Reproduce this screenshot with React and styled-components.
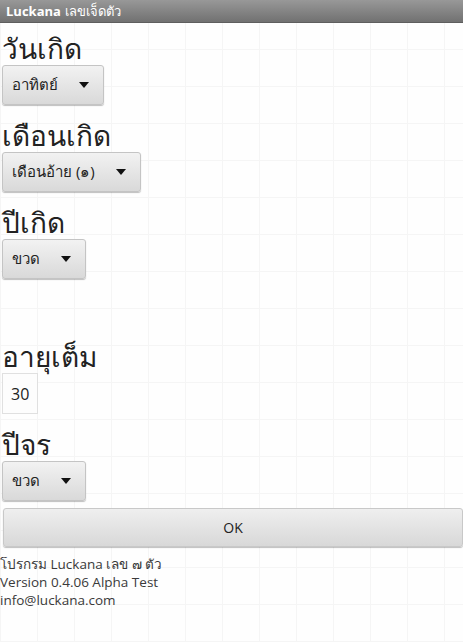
import React from "react";
import styled, { createGlobalStyle } from "styled-components";

const Global = createGlobalStyle`
  html, body { margin: 0; padding: 0; background: #fff; }
  body { font-family: "Open Sans", "Noto Sans", "DejaVu Sans", sans-serif; }
`;

const Screen = styled.div`
  width: 463px;
  height: 642px;
  overflow: hidden;
  background-color: #fefefe;
  background-image:
    linear-gradient(to right, #f5f5f5 1px, transparent 1px),
    linear-gradient(to bottom, #f5f5f5 1px, transparent 1px);
  background-size: 37px 37px;
  background-position: 0 12px;
  display: flex;
  flex-direction: column;
`;

const TitleBar = styled.div`
  height: 23px;
  display: flex;
  align-items: center;
  gap: 4px;
  padding-left: 6px;
  background: linear-gradient(to bottom, #989898, #717171);
  border-bottom: 1px solid #5e5e5e;
  box-sizing: border-box;
  color: #fff;
  font-size: 13px;
`;

const AppName = styled.span`
  font-weight: 700;
`;

const Content = styled.div`
  display: flex;
  flex-direction: column;
  align-items: flex-start;
  padding: 0 0 0 2px;
`;

const Label = styled.div`
  height: 42px;
  display: flex;
  align-items: flex-end;
  font-size: 28px;
  line-height: 34px;
  color: #222;
  margin-top: ${(p) => (p.$spaced ? "47px" : "0")};
`;

const Spinner = styled.div`
  height: 40px;
  box-sizing: border-box;
  display: inline-flex;
  align-items: center;
  gap: 21px;
  padding: 0 14px 0 9px;
  margin-bottom: 5px;
  border: 1px solid #c4c4c4;
  border-radius: 3px;
  background: linear-gradient(to bottom, #f2f2f2, #d9d9d9);
  box-shadow: 0 1px 1px rgba(0, 0, 0, 0.25);
  font-size: 15px;
  color: #222;
`;

const Arrow = styled.span`
  width: 0;
  height: 0;
  border-left: 5.5px solid transparent;
  border-right: 5.5px solid transparent;
  border-top: 6px solid #111;
`;

const NumberBox = styled.div`
  width: 36px;
  height: 41px;
  box-sizing: border-box;
  display: flex;
  align-items: center;
  padding-left: 8px;
  margin-bottom: 5px;
  border: 1px solid #e0e0e0;
  background: #fdfdfd;
  font-size: 16px;
  color: #222;
`;

const OkButton = styled.div`
  align-self: stretch;
  height: 39px;
  margin: 2px 0 0 1px;
  box-sizing: border-box;
  display: flex;
  align-items: center;
  justify-content: center;
  border: 1px solid #c8c8c8;
  border-radius: 3px;
  background: linear-gradient(to bottom, #efefef, #d8d8d8);
  box-shadow: 0 1px 1px rgba(0, 0, 0, 0.25);
  font-size: 14px;
  color: #222;
`;

const Footer = styled.div`
  margin-top: 8px;
  margin-left: -2px;
  font-size: 13.5px;
  line-height: 18px;
  color: #3a3a3a;
`;

function Select({ value }) {
  return (
    <Spinner>
      <span>{value}</span>
      <Arrow />
    </Spinner>
  );
}

export default function App() {
  return (
    <>
      <Global />
      <Screen>
        <TitleBar>
          <AppName>Luckana</AppName>
          <span>เลขเจ็ดตัว</span>
        </TitleBar>
        <Content>
          <Label>วันเกิด</Label>
          <Select value="อาทิตย์" />
          <Label>เดือนเกิด</Label>
          <Select value="เดือนอ้าย (๑)" />
          <Label>ปีเกิด</Label>
          <Select value="ขวด" />
          <Label $spaced>อายุเต็ม</Label>
          <NumberBox>30</NumberBox>
          <Label>ปีจร</Label>
          <Select value="ขวด" />
          <OkButton>OK</OkButton>
          <Footer>
            <div>โปรกรม Luckana เลข ๗ ตัว</div>
            <div>Version 0.4.06 Alpha Test</div>
            <div>info@luckana.com</div>
          </Footer>
        </Content>
      </Screen>
    </>
  );
}
